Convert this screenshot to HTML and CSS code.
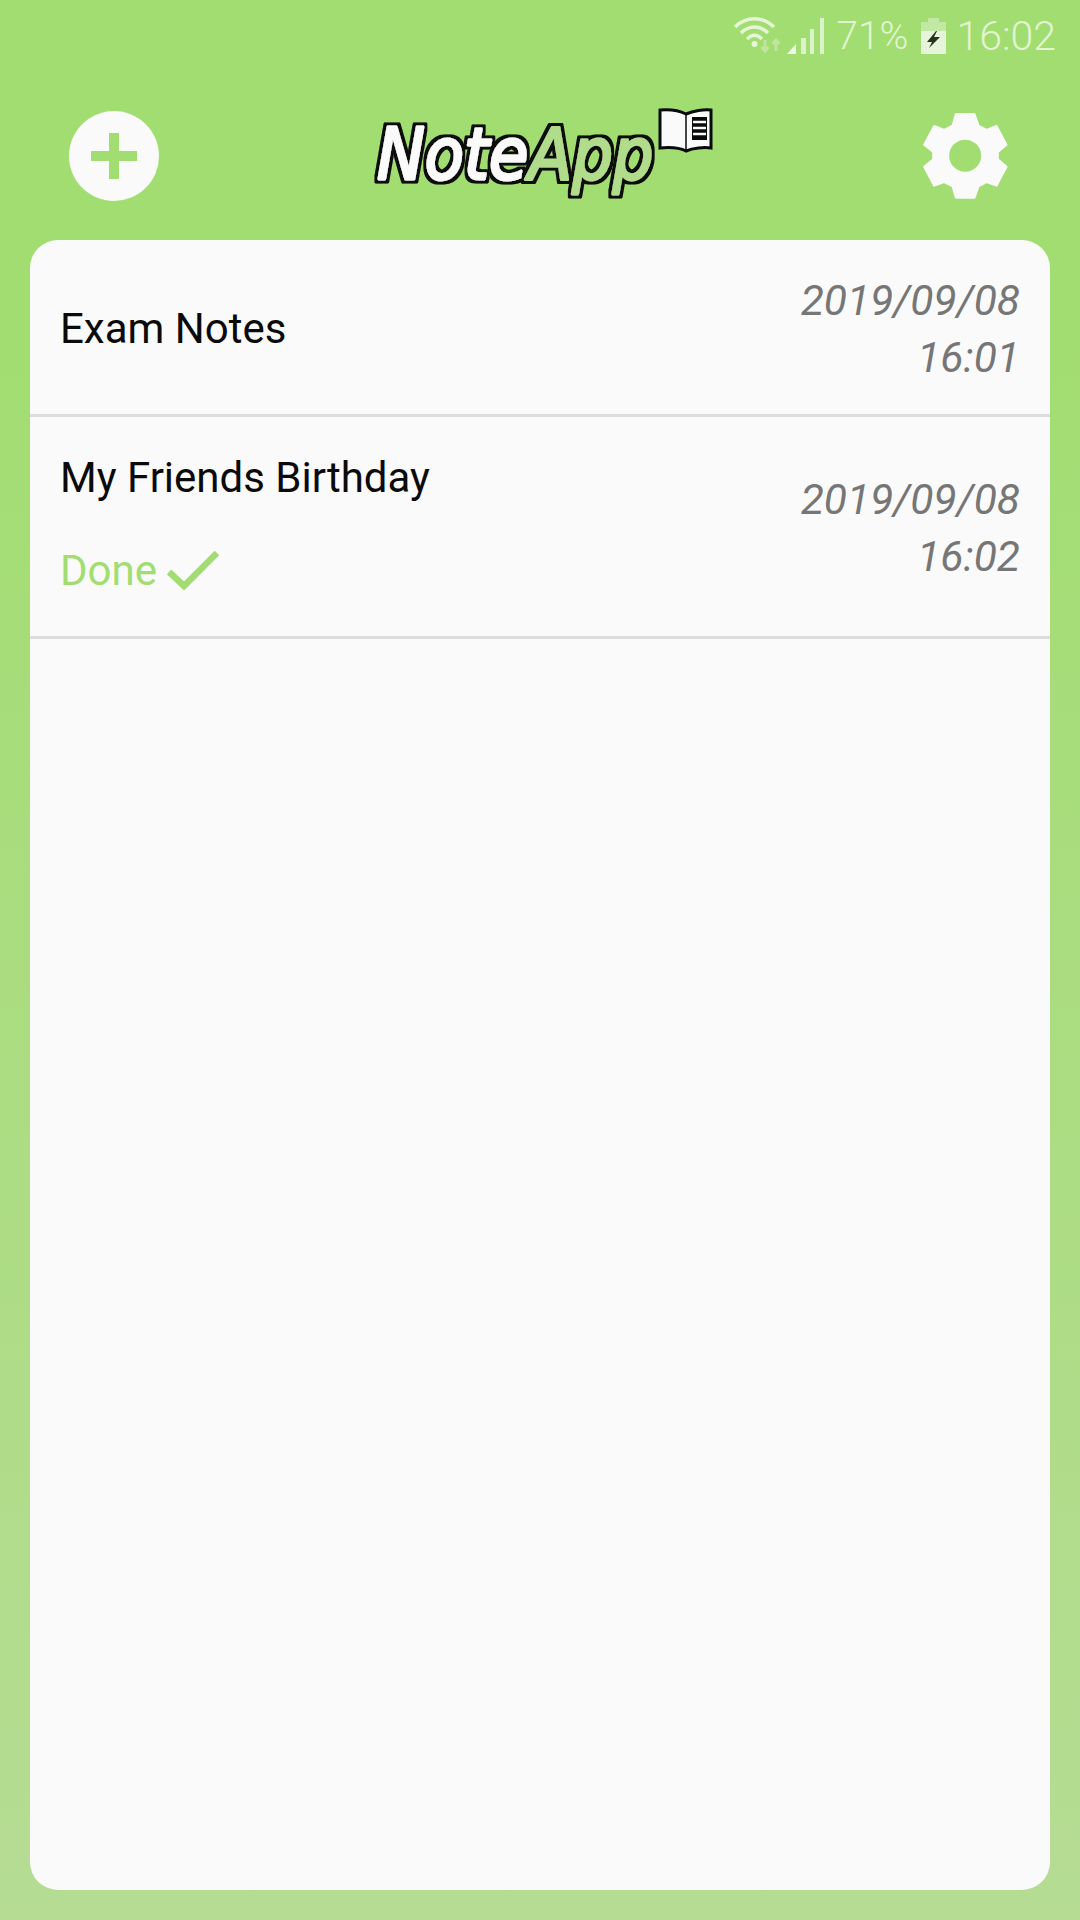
FILE: index.html
```html
<!DOCTYPE html>
<html lang="en">
<head>
<meta charset="utf-8">
<title>NoteApp</title>
<link rel="stylesheet" href="styles.css">
</head>
<body>
<div class="screen">
  <div class="status">
    <svg class="wifi" width="48" height="38" viewBox="0 0 48 38"><path class="arc" d="M1 10C12 -1 29 -1 40 10M7 16C15 8 26 8 34 16M13 22C18 17 23 17 28 22"/><circle cx="20.500" cy="27" r="3" class="dot"/><path class="dim" d="M31 23v11M27.500 30l3.500 4 3.500-4M42 34V23M38.500 27l3.500-4 3.500 4"/></svg>
    <svg class="signal" width="38" height="36" viewBox="0 0 38 36"><path d="M0 36L9 26V36Z" class="bar-strong"/><rect x="14" y="20" width="5" height="16" class="bar"/><rect x="23" y="11" width="4" height="25" class="bar"/><rect x="33" y="0" width="4" height="36" class="bar"/></svg>
    <span class="pct">71%</span>
    <svg class="batt" width="25" height="36" viewBox="0 0 25 36"><path d="M7 0h11v4h7v9H0V4h7Z" class="batt-top"/><path d="M0 13h25v23H0Z" class="batt-low"/><path d="M15 13L6 24h5l-3 6 11-11h-6l3-6Z" fill="#26331d"/></svg>
    <span class="clock">16:02</span>
  </div>
  <header class="topbar">
    <div class="add"><svg width="46" height="46" viewBox="0 0 46 46"><path d="M23 0v46M0 23h46" class="plus"/></svg></div>
    <svg class="logo" width="340" height="98" viewBox="0 0 340 98">
      <defs>
        <filter id="outline" x="-5%" y="-10%" width="110%" height="120%">
          <feMorphology in="SourceAlpha" operator="dilate" radius="2.500" result="fat"/>
          <feFlood flood-color="#0a0a0a"/>
          <feComposite in2="fat" operator="in" result="edge"/>
          <feGaussianBlur in="edge" stdDeviation="0.500" result="soft"/>
          <feMerge><feMergeNode in="soft"/><feMergeNode in="SourceGraphic"/></feMerge>
        </filter>
      </defs>
      <g filter="url(#outline)" transform="scale(1 1.120)">
        <text class="word" x="4" y="63.500"><tspan class="note">Note</tspan><tspan class="app">App</tspan></text>
      </g>
      <path d="M287 2C297 1 307 3 313 6C320 3 331 1 338 2V40C331 39 320 40 313 43C307 40 297 39 287 40Z" class="page"/>
      <path d="M313 6V43" class="spine"/>
      <path d="M319 9H334V32H319Z" class="block"/>
      <path d="M320 14H333M320 20H333M320 26H333" class="stripes"/>
    </svg>
    <svg class="gear" width="89" height="90" viewBox="66 64 266 270"><path class="gear-shape" fill-rule="evenodd" d="M170 73H226L238 108L262 121L292 109L322 165L296 187V209L322 231L292 288L262 277L238 290L226 324H170L160 290L135 277L105 288L75 231L102 209V187L75 165L105 109L135 121L160 108ZM198 147A51 51 0 1 0 198 249A51 51 0 1 0 198 147Z"/></svg>
  </header>
  <main class="card">
    <article class="row row-one">
      <div class="title title-solo">Exam Notes</div>
      <div class="stamp">2019/09/08<br>16:01</div>
    </article>
    <article class="row row-two">
      <div class="left">
        <div class="title">My Friends Birthday</div>
        <div class="done"><span>Done</span><svg width="52" height="40" viewBox="0 0 52 40"><path d="M2 21L17 35L50 2" class="tick"/></svg></div>
      </div>
      <div class="stamp">2019/09/08<br>16:02</div>
    </article>
  </main>
</div>
</body>
</html>
```
FILE: styles.css
```css
* { box-sizing: border-box; }
html, body { margin: 0; padding: 0; }
body { width: 1080px; height: 1920px; overflow: hidden; font-family: Roboto, sans-serif; }
.screen {
  width: 1080px; height: 1920px;
  display: flex; flex-direction: column;
  padding: 0 30px 30px;
  background: linear-gradient(180deg, #a1dd70 0%, #a1dd70 14%, #b6dc94 100%);
}
.status {
  height: 72px; flex: none;
  display: flex; align-items: center; justify-content: flex-end;
  margin-right: -6px;
  color: #e2f4d2;
  font-size: 41px; font-weight: 300;
}
.wifi { margin-right: 5px; }
.arc { fill: none; stroke: #e6f5d8; stroke-width: 3.500; }
.dot { fill: #e6f5d8; }
.dim { fill: none; stroke: #bfe5a0; stroke-width: 3; }
.signal { margin-right: 11px; }
.bar { fill: #dcf2ca; }
.bar-strong { fill: #eef8e4; }
.pct { margin-right: 13px; font-size: 39px; }
.batt { margin-right: 10px; }
.batt-top { fill: #c2e8a4; }
.batt-low { fill: #e6f5da; }
.topbar {
  height: 168px; flex: none;
  display: flex; align-items: center; justify-content: space-between;
  padding: 0 40px 0 39px;
}
.add {
  width: 90px; height: 90px; border-radius: 50%;
  background: #fafafa;
  display: flex; align-items: center; justify-content: center;
}
.plus { stroke: #a1dd70; stroke-width: 10; }
.logo { margin-top: 2px; margin-left: 6px; }
.word {
  font-family: "DejaVu Sans", sans-serif; font-style: italic;
  font-size: 64px;
  stroke-width: 2.500; stroke-linejoin: round; stroke-linecap: round;
}
.note { fill: #fafafa; stroke: #fafafa; }
.app { fill: #b0dc8c; stroke: #b0dc8c; }
.page { fill: #fafafa; stroke: #0a0a0a; stroke-width: 3; }
.spine { stroke: #0a0a0a; stroke-width: 1.500; fill: none; }
.block { fill: #0a0a0a; }
.stripes { stroke: #fafafa; stroke-width: 2.500; fill: none; }
.gear-shape { fill: #fafafa; stroke: #fafafa; stroke-width: 6; stroke-linejoin: round; }
.card {
  flex: 1;
  background: #fafafa;
  border-radius: 28px;
  display: flex; flex-direction: column;
}
.row {
  display: flex; align-items: center; justify-content: space-between;
  padding: 0 30px;
  border-bottom: 3px solid #dcdcdc;
}
.row-one { height: 177px; }
.row-two { height: 222px; }
.title { font-size: 42px; line-height: 48px; color: #0a0a0a; }
.title-solo { padding-top: 3px; height: 51px; }
.left { display: flex; flex-direction: column; gap: 46px; margin-top: -6px; }
.done { display: flex; align-items: center; gap: 10px; height: 46px; font-size: 42px; color: #a1dd70; }
.tick { fill: none; stroke: #a1dd70; stroke-width: 6.500; }
.stamp { font-size: 42.500px; line-height: 57px; font-style: italic; color: #767676; text-align: right; padding-top: 3px; }
```
